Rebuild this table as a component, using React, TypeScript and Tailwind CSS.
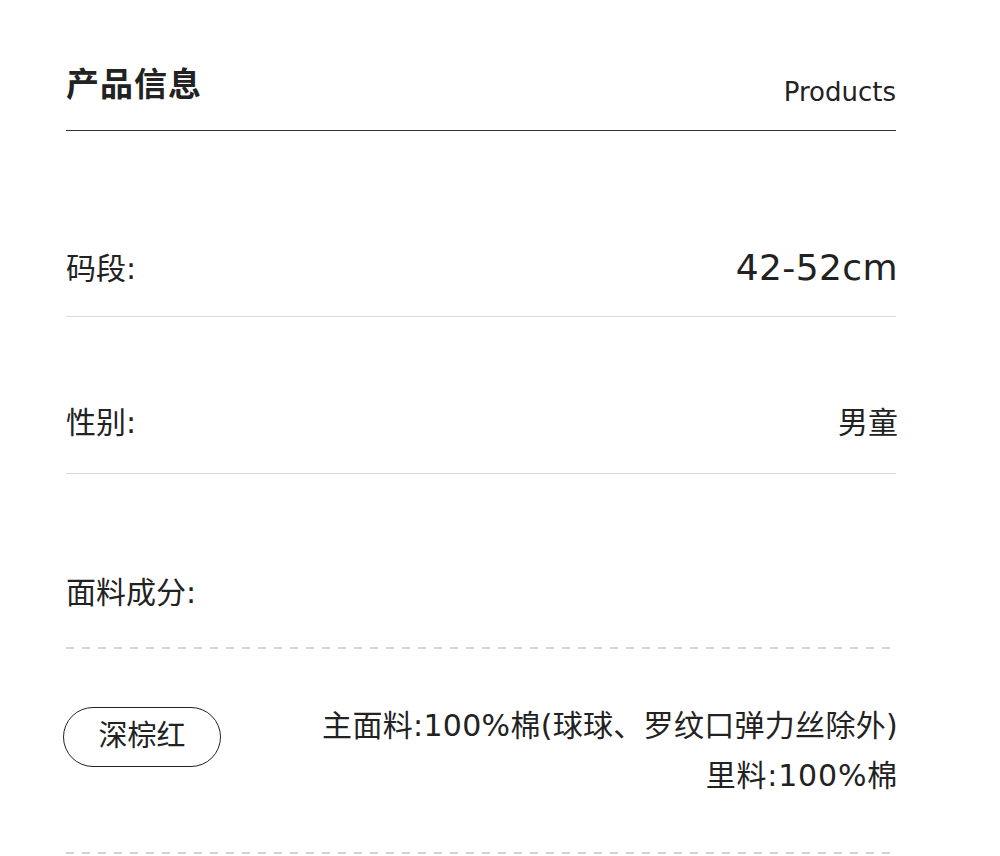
export default function App() {
  const font = { fontFamily: '"DejaVu Sans", "Noto Sans CJK SC", sans-serif' };
  return (
    <div className="w-[1000px] h-[856px] bg-white text-[#222] overflow-hidden" style={font}>
      <div className="ml-[66px] w-[830px] pt-[58px]">
        {/* header */}
        <div className="flex items-end justify-between border-b-[1.5px] border-[#333] pb-[24px]">
          <h1 className="text-[33px] font-bold leading-[48px] tracking-[1px]" style={{ fontFamily: '"Noto Sans CJK SC", sans-serif' }}>产品信息</h1>
          <span className="text-[26px] leading-[36px] mb-[-4px]">Products</span>
        </div>

        {/* size */}
        <div className="flex items-center justify-between h-[186px] pt-[90px] border-b border-[#d9d9d9]">
          <span className="text-[30px]">码段:</span>
          <span className="text-[36px] mt-[-2px] mr-[-2px] tracking-[0.4px]">42-52cm</span>
        </div>

        {/* gender */}
        <div className="flex items-center justify-between h-[157px] pt-[54px] border-b border-[#d9d9d9]">
          <span className="text-[30px]">性别:</span>
          <span className="text-[30px] mr-[-2px]">男童</span>
        </div>

        {/* fabric */}
        <div className="flex items-center h-[173px] pt-[64px]">
          <span className="text-[30px]">面料成分:</span>
        </div>
        <div className="h-[2px] bg-[repeating-linear-gradient(90deg,#d5d5d5_0_8px,transparent_8px_16px)]" />

        <div className="flex items-start justify-between pt-[58px] h-[203px]">
          <div className="ml-[-3px] w-[158px] h-[60px] rounded-full border-[1.5px] border-[#222] flex items-center justify-center text-[29px]">
            深棕红
          </div>
          <div className="text-right text-[30px] leading-[50px] mt-[-6px] mr-[-2px] tracking-[0.3px]">
            <div>主面料:100%棉(球球、罗纹口弹力丝除外)</div>
            <div className="tracking-[0.8px]">里料:100%棉</div>
          </div>
        </div>
        <div className="h-[2px] bg-[repeating-linear-gradient(90deg,#d5d5d5_0_8px,transparent_8px_16px)]" />
      </div>
    </div>
  );
}
